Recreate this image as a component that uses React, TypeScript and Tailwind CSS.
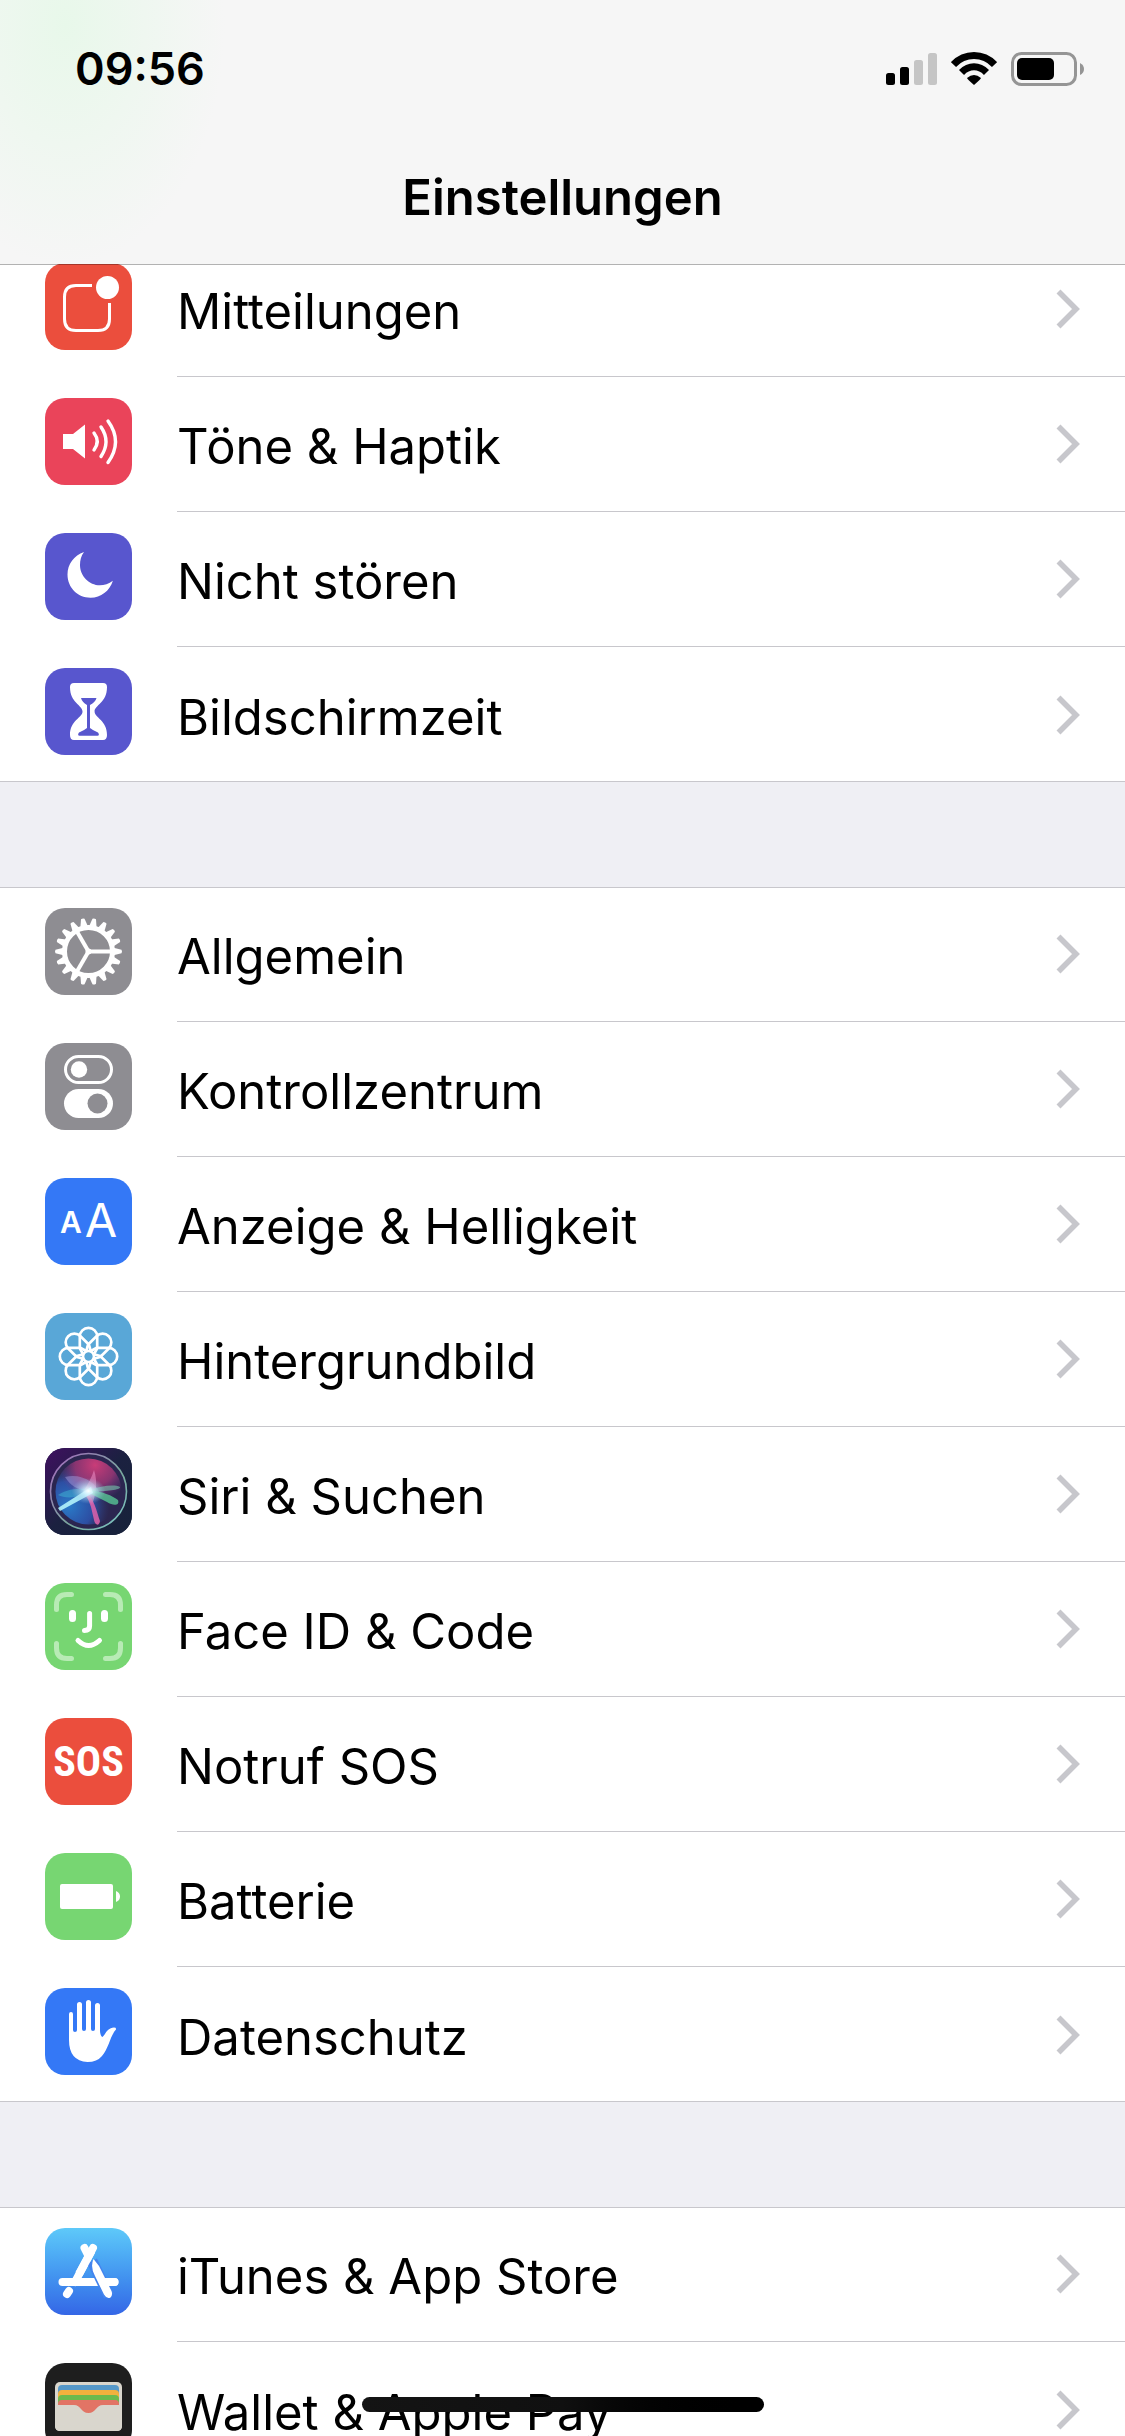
import type { ReactNode } from "react";

type Item = { label: string; tile: string; icon: ReactNode };

const Glyph = ({ children }: { children: ReactNode }) => (
  <svg viewBox="0 0 87 87" className="size-full" fill="none" aria-hidden="true">
    {children}
  </svg>
);

const NotificationIcon = () => (
  <Glyph>
    <path d="M47 22.5H31Q19.5 22.5 19.5 34V56Q19.5 67.5 31 67.5H53Q64.5 67.5 64.5 56V40" stroke="#fff" strokeWidth="3" />
    <circle cx="62.5" cy="24.5" r="11.5" fill="#fff" />
  </Glyph>
);

const SoundIcon = () => (
  <Glyph>
    <path d="M18 36H28L40 26.5V60.5L28 51H18Z" fill="#fff" />
    <path d="M49 35Q55.5 43.5 49 52M56 29Q66 43.5 56 58.5M63 23Q78 43.5 63 64.5" stroke="#fff" strokeWidth="3.4" strokeLinecap="round" />
  </Glyph>
);

const MoonIcon = () => (
  <Glyph>
    <path d="M39 19C29 22.5 22.5 31 22.5 41.5C22.5 54.5 32.5 64.7 45.5 64.7C56 64.7 64.5 58 67.9 47.7C64 51 59 52.3 55 52.3C44 52.3 35 43 35 32C35 27 36 23 39 19Z" fill="#fff" />
  </Glyph>
);

const HourglassIcon = () => (
  <Glyph>
    <path d="M29 15H58Q62 15 62 19C62 35 49.6 37 49.6 43.5C49.6 50 62 52 62 67Q62 72 58 72H29Q25 72 25 67C25 52 37.5 50 37.5 43.5C37.5 37 25 35 25 19Q25 15 29 15Z" fill="#fff" />
    <path d="M36 30H51.5Q50.5 34 45 37V60Q48 62.5 53 64.5Q55 67.5 52.5 67.7H34.5Q32 67.5 34 64.5Q39 62.5 42 60V37Q37 34 36 30Z" fill="#5856ce" />
  </Glyph>
);

const GearIcon = () => (
  <Glyph>
    <g transform="translate(43.5 43.5)">
      {Array.from({ length: 18 }, (_, i) => (
        <path key={i} d="M25 -3.8L33 -1.8Q34 0 33 1.8L25 3.8Z" fill="#fff" transform={`rotate(${i * 20})`} />
      ))}
      <circle r="24" stroke="#fff" strokeWidth="5" />
      {[0, 120, 240].map((a) => (
        <path key={a} d="M0 0H24" stroke="#fff" strokeWidth="4" transform={`rotate(${a})`} />
      ))}
      <circle r="3" fill="#fff" />
    </g>
  </Glyph>
);

const TogglesIcon = () => (
  <Glyph>
    <rect x="20.5" y="13.5" width="46" height="26" rx="13" stroke="#fff" strokeWidth="3" />
    <circle cx="34" cy="26.5" r="8.2" fill="#fff" />
    <rect x="19" y="46" width="49" height="29" rx="14.5" fill="#fff" />
    <circle cx="52.5" cy="60.5" r="10" fill="#8e8d92" />
  </Glyph>
);

const TextSizeIcon = () => (
  <Glyph>
    <g fill="#fff" textAnchor="middle" className="font-['Inter']">
      <text x="26" y="55" className="text-[30px] font-semibold">A</text>
      <text x="56" y="59" className="text-[47px] font-normal">A</text>
    </g>
  </Glyph>
);

const FlowerIcon = () => (
  <Glyph>
    <g transform="translate(43.5 43.5)" stroke="#fff" strokeWidth="2.7" strokeLinejoin="round">
      {Array.from({ length: 8 }, (_, i) => (
        <path key={i} d="M-1.5 -5L-8.7 -9V-20A8.7 8.7 0 0 1 8.7 -20V-9L1.5 -5" transform={`rotate(${i * 45})`} />
      ))}
      <circle r="5.5" />
    </g>
  </Glyph>
);

const SiriIcon = () => (
  <Glyph>
    <defs>
      <linearGradient id="siriBg" x1="0" y1="0" x2="1" y2="1">
        <stop offset="0" stopColor="#3f1060" />
        <stop offset="0.5" stopColor="#1b2140" />
        <stop offset="1" stopColor="#17223a" />
      </linearGradient>
      <radialGradient id="siriPink" cx="0.6" cy="0.1" r="0.55">
        <stop offset="0" stopColor="#c93c78" />
        <stop offset="0.55" stopColor="#a03878" stopOpacity="0.8" />
        <stop offset="1" stopColor="#7a3a90" stopOpacity="0" />
      </radialGradient>
      <radialGradient id="siriBlue" cx="0.2" cy="0.72" r="0.62">
        <stop offset="0" stopColor="#2a7cc8" />
        <stop offset="0.6" stopColor="#2d59b8" stopOpacity="0.8" />
        <stop offset="1" stopColor="#30407a" stopOpacity="0" />
      </radialGradient>
      <radialGradient id="siriGlow">
        <stop offset="0" stopColor="#fff" />
        <stop offset="0.3" stopColor="#d5f4ff" stopOpacity="0.75" />
        <stop offset="1" stopColor="#8fc4e8" stopOpacity="0" />
      </radialGradient>
      <linearGradient id="siriRim" x1="0" y1="0" x2="1" y2="1">
        <stop offset="0" stopColor="#a768c0" />
        <stop offset="0.6" stopColor="#78a79c" />
        <stop offset="1" stopColor="#7cc8c8" />
      </linearGradient>
    </defs>
    <rect width="87" height="87" fill="url(#siriBg)" />
    <circle cx="43.5" cy="43.5" r="38" fill="#2b2650" stroke="url(#siriRim)" strokeWidth="1.6" />
    <circle cx="43.5" cy="43.5" r="33" fill="url(#siriBlue)" />
    <circle cx="43.5" cy="43.5" r="33" fill="url(#siriPink)" />
    <path d="M20 29C36 25 51 34 55 46L44 43C32 42 25 37 20 29Z" fill="#a7a5e2" opacity="0.45" />
    <path d="M49 22C53 34 51 46 47 57L38 44C43 36 47 29 49 22Z" fill="#ee8fc7" opacity="0.55" />
    <path d="M13 47C25 39 39 41 48 41L30 49C23 50 17 49 13 47Z" fill="#42bfd8" opacity="0.45" />
    <path d="M43 42C57 38 69 36 75 39C76 42 61 43 47 44Z" fill="#78c7ad" opacity="0.6" />
    <path d="M43 42C57 43 68 48 73 52C75 58 68 58 62 54L44 45Z" fill="#58c595" opacity="0.8" />
    <path d="M40 43C49 49 52 65 55 73C54 79 50 77 49 72L46 59Z" fill="#df62ac" opacity="0.85" />
    <path d="M46 39L13 60L15 63L48 45Z" fill="#b1f3fb" opacity="0.9" />
    <ellipse cx="43.5" cy="43" rx="17" ry="13" fill="url(#siriGlow)" />
  </Glyph>
);

const FaceIdIcon = () => (
  <Glyph>
    <path d="M11.5 26.5V22Q11.5 11.5 22 11.5H26.5M60.5 11.5H65Q75.5 11.5 75.5 22V26.5M75.5 60.5V65Q75.5 75.5 65 75.5H60.5M26.5 75.5H22Q11.5 75.5 11.5 65V60.5" stroke="#b8ebb5" strokeWidth="5" strokeLinecap="round" />
    <path d="M27.5 30.5V35.5M59.5 30.5V35.5" stroke="#fff" strokeWidth="7" strokeLinecap="round" />
    <path d="M44.6 30.5V43Q44.6 47.5 39.5 47.5M33 57.5Q43.5 67.5 54.5 57.5" stroke="#fff" strokeWidth="5" strokeLinecap="round" />
  </Glyph>
);

const SosIcon = () => (
  <span className="flex size-full items-center justify-center font-['Liberation_Sans_Narrow','Roboto_Condensed','Roboto',sans-serif] text-[42px] font-bold text-white">
    SOS
  </span>
);

const BatteryIcon = () => (
  <Glyph>
    <rect x="15" y="31" width="53" height="25" rx="2" fill="#fff" />
    <path d="M71 38Q75 39.5 75 43.5Q75 47.5 71 49Z" fill="#fff" />
  </Glyph>
);

const HandIcon = () => (
  <Glyph>
    <path d="M24 26Q24 24 26 24Q28 24 28 26V42Q28 44 30 44Q32 44 32 42V16.5Q32 14 34.5 14Q37 14 37 16.5V41Q37 43 39 43Q41 43 41 41V14.5Q41 12 43.5 12Q46 12 46 14.5V41Q46 43 48 43Q50 43 50 41V17.5Q50 15 52.5 15Q55 15 55 17.5V43Q55.5 48.5 57.5 49C60 47 62 40 69 39.5Q71.5 39.5 71 41.5C65 48 64 60 57 68Q52 74 42.5 74Q24 73 24 52Z" fill="#fff" />
  </Glyph>
);

const AppStoreIcon = () => (
  <Glyph>
    <path d="M17.5 54H69.5" stroke="#fff" strokeWidth="8" strokeLinecap="round" />
    <path d="M48 20L30 54" stroke="#fff" strokeWidth="8" strokeLinecap="round" />
    <path d="M39.5 20L43 27" stroke="#fff" strokeWidth="8" strokeLinecap="round" />
    <path d="M47 33L64 68" stroke="#4484ee" strokeWidth="11" />
    <path d="M48.5 31Q45 39 50 48L59 66.5Q62 71.5 65.5 69.5Q68 67 66.5 63L54 38Z" fill="#fff" />
    <path d="M58 54H69.5" stroke="#fff" strokeWidth="8" strokeLinecap="round" />
    <path d="M46.5 23L34 46" stroke="#fff" strokeWidth="8" />
    <path d="M24 63L22 66" stroke="#fff" strokeWidth="8" strokeLinecap="round" />
  </Glyph>
);

const WalletIcon = () => (
  <Glyph>
    <rect x="10" y="19" width="67" height="49" rx="5" fill="#d9d6cd" />
    <path d="M13 45V26Q13 22 17 22H70Q74 22 74 26V45Z" fill="#5598c9" />
    <path d="M13 45V31Q13 27 17 27H70Q74 27 74 31V45Z" fill="#f3b13d" />
    <path d="M13 45V36Q13 32 17 32H70Q74 32 74 36V45Z" fill="#6dba4d" />
    <path d="M13 50V41Q13 37 17 37H70Q74 37 74 41V50Z" fill="#e27465" />
    <path d="M10 42H29C36 42 36 50 43.5 50C51 50 51 42 58 42H77V63Q77 68 72 68H15Q10 68 10 63Z" fill="#d9d6cd" />
  </Glyph>
);

const groups: Item[][] = [
  [
    { label: "Mitteilungen", tile: "bg-[#eb4e3d]", icon: <NotificationIcon /> },
    { label: "Töne & Haptik", tile: "bg-[#ea445a]", icon: <SoundIcon /> },
    { label: "Nicht stören", tile: "bg-[#5856ce]", icon: <MoonIcon /> },
    { label: "Bildschirmzeit", tile: "bg-[#5856ce]", icon: <HourglassIcon /> },
  ],
  [
    { label: "Allgemein", tile: "bg-[#8e8d92]", icon: <GearIcon /> },
    { label: "Kontrollzentrum", tile: "bg-[#8e8d92]", icon: <TogglesIcon /> },
    { label: "Anzeige & Helligkeit", tile: "bg-[#3478f6]", icon: <TextSizeIcon /> },
    { label: "Hintergrundbild", tile: "bg-[#59a7d7]", icon: <FlowerIcon /> },
    { label: "Siri & Suchen", tile: "bg-[#1b2140]", icon: <SiriIcon /> },
    { label: "Face ID & Code", tile: "bg-[#77d672]", icon: <FaceIdIcon /> },
    { label: "Notruf SOS", tile: "bg-[#eb4e3d]", icon: <SosIcon /> },
    { label: "Batterie", tile: "bg-[#77d672]", icon: <BatteryIcon /> },
    { label: "Datenschutz", tile: "bg-[#3478f6]", icon: <HandIcon /> },
  ],
  [
    { label: "iTunes & App Store", tile: "bg-linear-to-b from-[#5ec9f9] to-[#3566e6]", icon: <AppStoreIcon /> },
    { label: "Wallet & Apple Pay", tile: "bg-[#1e1e1e]", icon: <WalletIcon /> },
  ],
];

const StatusBar = () => (
  <div className="flex h-[138px] items-center justify-between pr-[41px] pl-[75px]">
    <time className="text-[45px] font-semibold">09:56</time>
    <div className="flex items-center gap-[14px]">
      <svg width="51" height="34" viewBox="0 0 51 34" aria-label="Signal">
        <rect x="0" y="21" width="9" height="12" rx="2.5" />
        <rect x="14" y="15" width="9" height="18" rx="2.5" />
        <rect x="28" y="8" width="9" height="25" rx="2.5" fill="#c5c5c5" />
        <rect x="42" y="1" width="9" height="32" rx="2.5" fill="#c5c5c5" />
      </svg>
      <svg width="46" height="34" viewBox="0 0 46 34" fill="none" stroke="#000" strokeWidth="7" aria-label="WLAN">
        <path d="M2.5 12.5Q11 3.5 23 3.5Q35 3.5 43.5 12.5" />
        <path d="M10.5 20.5Q16 14.8 23 14.8Q30 14.8 35.5 20.5" />
        <path d="M16 26Q23 20 30 26Q30 27 23 33Q16 27 16 26Z" fill="#000" stroke="none" />
      </svg>
      <svg width="73" height="34" viewBox="0 0 73 34" aria-label="Batterie">
        <rect x="1.5" y="1.5" width="63" height="31" rx="9" fill="none" stroke="#959595" strokeWidth="3" />
        <rect x="6" y="6" width="37" height="22" rx="5" />
        <path d="M69 11Q73 13 73 17Q73 21 69 23Z" fill="#959595" />
      </svg>
    </div>
  </div>
);

const SettingsRow = ({ label, tile, icon, last }: Item & { last: boolean }) => (
  <li>
    <a href="#" className="flex h-[135px] gap-[45px] pl-[45px]">
      <span className={`mt-[21px] size-[87px] shrink-0 overflow-hidden rounded-[20px] ${tile}`}>{icon}</span>
      <span className={`flex flex-1 items-center justify-between pr-[45px] ${last ? "" : "border-b border-[#c8c7cc]"}`}>
        <span className="pt-[6px] text-[49px] leading-[60px]">{label}</span>
        <svg width="24" height="40" viewBox="0 0 24 40" fill="none" stroke="#c7c7cc" strokeWidth="5.6" aria-hidden="true">
          <path d="M2.5 2.5L20 20L2.5 37.5" />
        </svg>
      </span>
    </a>
  </li>
);

export default function App() {
  return (
    <div className="relative h-screen overflow-hidden bg-[#efeff4] font-['Inter',sans-serif] text-black">
      <header className="relative z-10 h-[265px] border-b border-black/30 bg-[#f6f6f6] bg-[radial-gradient(ellipse_160px_240px_at_65px_25px,#e8f8ea,transparent)] bg-clip-padding">
        <StatusBar />
        <h1 className="text-center text-[49px] leading-[120px] font-semibold">Einstellungen</h1>
      </header>
      <main className="-mt-[23px] flex flex-col gap-[105px]">
        {groups.map((items, g) => (
          <ul key={g} className="bg-white shadow-[inset_0_1px_0_#c8c7cc,inset_0_-1px_0_#c8c7cc]">
            {items.map((item, i) => (
              <SettingsRow key={item.label} {...item} last={i === items.length - 1} />
            ))}
          </ul>
        ))}
      </main>
      <div className="absolute bottom-6 left-1/2 z-20 h-[15px] w-[402px] -translate-x-1/2 rounded-full bg-linear-to-r from-[#141414] via-[#101010] to-black" />
    </div>
  );
}
